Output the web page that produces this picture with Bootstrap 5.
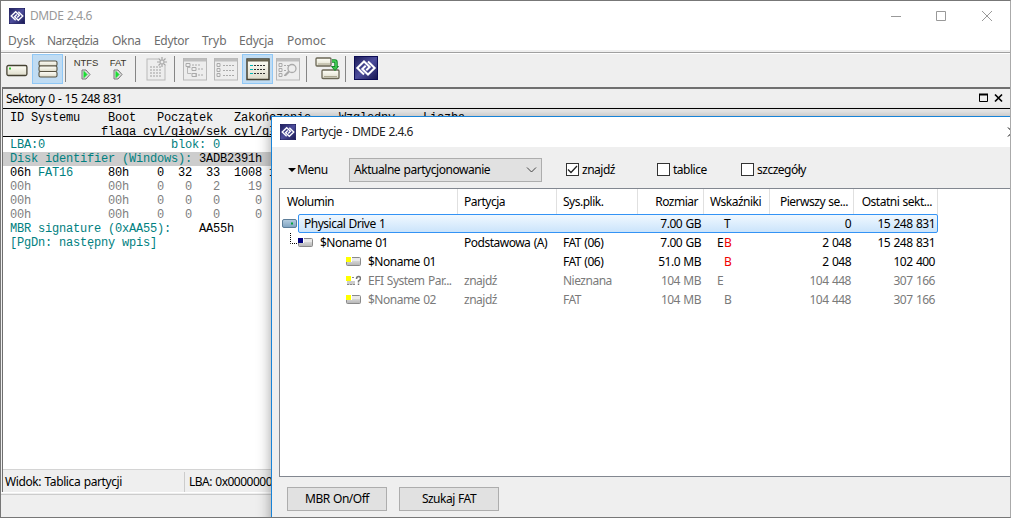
<!DOCTYPE html>
<html lang="pl">
<head>
<meta charset="utf-8">
<title>DMDE 2.4.6</title>
<link href="https://cdn.jsdelivr.net/npm/bootstrap@5.3.0/dist/css/bootstrap.min.css" rel="stylesheet">
<style>
html,body{margin:0;overflow:hidden}
body{font-family:"Noto Sans","Open Sans",sans-serif;font-size:12px;letter-spacing:-.5px;word-spacing:.7px;line-height:16px;color:#000;background:#efefef}
svg{display:block;flex:none}
.desk{width:1011px;height:518px;border:1px solid #777;border-right-color:#aaa;background:#efefef;position:relative;overflow:hidden}
.titlebar{height:30px;background:#fff;color:#999;padding-left:8px}
.menus{height:19px;background:#fff;color:#6d6d6d;letter-spacing:0}
.menus span{display:block;white-space:nowrap}
.rule-top{height:4px;border-top:2px solid #efefef;border-bottom:1px solid #fff;position:relative;background:#a0a0a0}
.tools{height:33px;background:#efefef}
.tool{height:30px;display:flex;align-items:center;justify-content:center}
.tool.on{background:#c0dcf3;border:1px solid #90c8f6}
.vline{width:1px;height:26px;background:#858585;margin-top:2px}
.fs{font-size:9.5px;line-height:9px;letter-spacing:-.1px;color:#3a3527;font-family:"Liberation Sans",sans-serif;justify-content:flex-start;padding-top:4px}
.fs svg{margin-top:2px}
.pane{height:405px;margin-left:1px;border-top:2px solid #707070;border-left:1px solid #707070;background:#fff}
.panehead{height:20px;background:#efefef;border-bottom:1px solid #000;padding:1px 6px 0 3px}
.mono{font-family:"Liberation Mono",monospace;font-size:12px;letter-spacing:-.201px;word-spacing:0;line-height:14px;margin:0;padding-left:7px;overflow:hidden;white-space:pre;color:#000}
.colhead{height:28px;background:#efefef;border-bottom:1px solid #000;padding-top:2px;line-height:14px}
.mono div{height:14px;margin-left:-7px;padding-left:7px}
.te{color:#008080}.gr{color:#808080}.hl{background:#cdcdcd}
.status{height:24px;background:#efefef;border-top:1px solid #d4d4d4}
.dialog{position:absolute;left:270px;top:115px;width:760px;height:420px;border:1px solid #1883d7;background:#efefef;box-shadow:0 2px 13px rgba(0,0,0,.38)}
.dtitle{height:30px;background:#fff;padding:0 0 1px 8px;color:#222}
.opts{height:41px}
.combo{width:193px;height:24px;background:#e1e1e1;border:1px solid #adadad;padding:0 4px;letter-spacing:-.46px}
.ck{width:13px;height:13px;border:1px solid #333;background:#fff;margin-right:3px}
.list{margin-left:7px;height:289px;border:1px solid #828790;background:#fff;width:760px}
.lrow{display:grid;grid-template-columns:178px 99px 81px 66px 66px 84px 84px;height:19px;align-items:center;white-space:nowrap;position:relative}
.lrow>*{padding-left:6px}
.lrow .n{text-align:right;padding:0 3px 0 0}
.lhead{height:25px;align-items:stretch;line-height:26px}
.lhead>*{border-right:1px solid #e0e0e0}
.lhead .n{padding-right:5px}
.sel::before{content:"";position:absolute;left:18px;right:0;width:640px;top:0;height:19px;border:1px solid #3393f5;border-radius:2px;background:linear-gradient(#f0f8ff,#cbe4fb)}
.sel>*{position:relative}
.dim{color:#7a7a7a}
.fl{display:grid;grid-template-columns:7px 8px;padding-left:13px!important}
.red{color:#f00000}
.pbtn{width:100px;height:24px;border:1px solid #adadad;background:#e1e1e1;text-align:center;line-height:22px}
.cut{height:12px;border:1px solid #adadad;background:#e1e1e1}
.w100{width:100px}.w107{width:107px}.w86{width:86px}
</style>
</head>
<body>
<svg width="0" height="0" class="position-absolute">
<defs>
<linearGradient id="nv" x1="0" y1="0" x2="1" y2="1"><stop offset="0" stop-color="#1c1c58"/><stop offset=".5" stop-color="#4d4d9c"/><stop offset="1" stop-color="#15154e"/></linearGradient>
<linearGradient id="gd" x1="0" y1="0" x2="0" y2="1"><stop offset="0" stop-color="#eee"/><stop offset="1" stop-color="#b5b5b5"/></linearGradient>
<linearGradient id="bl" x1="0" y1="0" x2="0" y2="1"><stop offset="0" stop-color="#b5cde0"/><stop offset="1" stop-color="#7ea2c0"/></linearGradient>
<linearGradient id="cr" x1="0" y1="0" x2="0" y2="1"><stop offset="0" stop-color="#fffff8"/><stop offset="1" stop-color="#dedccb"/></linearGradient>
<symbol id="logo" viewBox="0 0 24 24"><rect x=".5" y=".5" width="23" height="23" fill="url(#nv)" stroke="#0c0c55"/><g fill="none" stroke="#fff" stroke-width="2"><path d="M10 18.500 3.300 12 10 5.500 15.700 11 12.300 14.300"/><path d="M14 5.500 20.700 12 14 18.500 8.300 13 11.700 9.700"/></g></symbol>
<symbol id="part" viewBox="0 0 15 11"><rect x=".5" y="1.500" width="14" height="8" rx="1" fill="url(#gd)" stroke="#8a8a8a"/><path d="M6 2.500h8v2.500H6z" fill="#e8e8e8"/><path d="M0 0h6v6H0z" fill="#fff"/></symbol>
<symbol id="tree" viewBox="0 0 24 23"><rect x=".5" y=".5" width="23" height="21.500" fill="#ededed" stroke="#b8b8b8"/><path d="M1 2h22" stroke="#bebebe" stroke-width="3"/></symbol>
</defs>
</svg>

<div class="desk">
  <div class="titlebar d-flex align-items-center">
    <svg width="16" height="16" style="margin-top:-1px"><use href="#logo"/></svg><span style="margin-left:5px;letter-spacing:-.4px">DMDE 2.4.6</span>
    <svg class="ms-auto" width="124" height="30" fill="none" stroke="#999"><path d="M5 15.500h10M50.500 10.500h9v9h-9zM96 10l10 10m0-10l-10 10"/></svg>
  </div>
  <div class="menus d-flex align-items-center" style="padding-left:7px">
    <span style="width:39px">Dysk</span><span style="width:65px;letter-spacing:-.5px">Narzędzia</span><span style="width:42px;letter-spacing:-.3px">Okna</span><span style="width:48px;letter-spacing:-.3px">Edytor</span><span style="width:37px">Tryb</span><span style="width:48px;letter-spacing:-.2px">Edycja</span><span>Pomoc</span>
  </div>
  <div class="rule-top"></div>
  <div class="tools d-flex">
    <div class="tool" style="width:31px;padding-top:2px"><svg width="22" height="13"><rect x=".9" y="1.500" width="20" height="10" rx="1.500" fill="url(#cr)" stroke="#454132" stroke-width="1.300"/><path d="M3 4.500h2" stroke="#32cc32" stroke-width="2"/></svg></div>
    <div class="tool on" style="width:31px"><svg width="20" height="18" fill="url(#cr)" stroke="#585443" stroke-width="1.100"><rect x="1" y="1" width="18" height="5" rx="1.500"/><rect x="1" y="6" width="18" height="5.500" rx="1.500"/><rect x="1" y="11.500" width="18" height="5.500" rx="1.500"/></svg></div>
    <div class="vline" style="margin-left:2px"></div>
    <div class="tool flex-column fs" style="width:40px"><span>NTFS</span><svg width="10" height="11"><path d="M1 1h4l4 4.500-4 4.500H1z" fill="#ddd" stroke="#777"/><path d="M3 2.500v6l3-3z" fill="#19dd32" stroke="#19dd32"/></svg></div>
    <div class="tool flex-column fs" style="width:24px"><span>FAT</span><svg width="10" height="11"><path d="M1 1h4l4 4.500-4 4.500H1z" fill="#ddd" stroke="#777"/><path d="M3 2.500v6l3-3z" fill="#19dd32" stroke="#19dd32"/></svg></div>
    <div class="vline" style="margin-left:5px"></div>
    <div class="tool" style="width:38px;padding-left:4px"><svg width="22" height="24" stroke="#b9b9b9" fill="#ededed"><rect x="1" y="2" width="18" height="21" /><path d="M4 10h12M4 13h12M4 16h12M4 19h12" stroke-width="1.500" stroke-dasharray="2 1"/><rect x="12" y="0" width="10" height="9" stroke="none"/><path d="M16 0v10M11 5h10M12.500 1.500l7 7m0-7l-7 7" stroke="#a5a5a5" stroke-width="1.200"/><circle cx="16" cy="5" r="2" stroke="#aaa"/></svg></div>
    <div class="vline"></div>
    <div class="tool" style="width:40px"><svg width="24" height="23"><use href="#tree"/><path d="M4.500 5v10.500h4M4.500 9.500h3M13.500 15v4" stroke="#b8b8b8" fill="none"/><g fill="#eee" stroke="#aaa"><path d="M3 5.500h4v3H3zM9 9.500h4v3H9zM9 15.500h4v3H9z"/><path d="M9 7h9M15 11h6M15 17h6" stroke-dasharray="2 1"/></g></svg></div>
    <div class="tool" style="width:24px;margin-left:-1px"><svg width="24" height="23"><use href="#tree"/><g fill="none" stroke="#aaa"><path d="M3 5.500h3v3H3zM3 10.500h3v3H3zM3 15.500h3v3H3z"/><path d="M9 7.500h12M9 12.500h12M9 17.500h12" stroke-dasharray="2 1"/></g></svg></div>
    <div class="tool on" style="width:31px;margin-left:4px"><svg width="24" height="23"><rect x="1" y="1" width="22" height="20.500" fill="url(#cr)" stroke="#454132" stroke-width="1.500"/><path d="M1 2.500h22" stroke="#66624f" stroke-width="2"/><path d="M8 7.500h12M8 11.500h12M8 15.500h12" stroke="#333" stroke-dasharray="2 1"/><path d="M4 7.500h3M4 11.500h3M4 15.500h3" stroke="#00b5b5"/></svg></div>
    <div class="tool" style="width:31px;padding-right:1px"><svg width="24" height="23"><use href="#tree"/><g fill="none" stroke="#aaa"><path d="M3 5.500h3v3H3zM3 10.500h3v3H3zM3 15.500h3v3H3z"/><path d="M8 7.500h5M8 12.500h3M8 17.500h2" stroke-dasharray="2 1"/><circle cx="16" cy="10.500" r="4" fill="#eee" stroke-width="1.300"/><path d="M13 13.500l-4 4" stroke-width="2.200"/></g></svg></div>
    <div class="vline" style="margin-left:2px"></div>
    <div class="tool" style="width:39px;padding-left:1px;margin-top:-1px"><svg width="25" height="24"><g fill="url(#cr)" stroke="#6b6755" stroke-width="1.300"><rect x="1" y="2" width="15" height="8" rx="1"/><rect x="7" y="14" width="17" height="8.500" rx="1"/></g><path d="M3 8h12M9 20.500h13" stroke="#aaa68f"/><path d="M17 5h3q1 0 1 1.500V11" fill="none" stroke="#16862b" stroke-width="3.500"/><path d="M16.500 10.500h7l-3.500 4z" fill="#39c749" stroke="#16862b"/><path d="M17 5h3q1 0 1 1.500V11" fill="none" stroke="#4bd85b" stroke-width="1.500"/></svg></div>
    <div class="vline" style="margin-left:-1px"></div>
    <div class="tool" style="width:40px;margin-top:-1px"><svg width="24" height="24"><use href="#logo"/></svg></div>
  </div>
  <div class="pane">
    <div class="panehead d-flex align-items-center"><span>Sektory 0 - 15 248 831</span><svg class="ms-auto" width="26" height="12" fill="none" stroke="#000"><path d="M1.500 1.500h8v7h-8z"/><path d="M1 1.500h9" stroke-width="2"/><path d="M17 1.500l7 7m0-7l-7 7" stroke-width="1.700"/></svg></div>
    <pre class="mono colhead">ID Systemu    Boot   Początek   Zakończenie    Względny    Liczba
             flaga cyl/głow/sek cyl/gł</pre>
    <div class="mono" style="height:332px;padding-top:1px"><div class="te">LBA:0                  blok: 0</div><div class="hl"><span class="te">Disk identifier (Windows):</span> 3ADB2391h</div><div>06h <span class="te">FAT16</span>     80h    0  32  33  1008 1</div><div class="gr">00h           00h    0   0   2    19</div><div class="gr">00h           00h    0   0   0     0</div><div class="gr">00h           00h    0   0   0     0</div><div><span class="te">MBR signature (0xAA55):</span>    AA55h</div><div class="te">[PgDn: następny wpis]</div></div>
    <div class="status d-flex align-items-center" style="padding-left:2px"><span style="width:179px;letter-spacing:-.4px">Widok: Tablica partycji</span><span class="border-start border-1" style="padding-left:4px;border-color:#ccc!important;line-height:20px">LBA: 0x0000000000</span></div>
  </div>
  <div style="border-top:1px solid #fff;border-bottom:1px solid #ccc;height:3px"></div>

  <div class="dialog">
    <div class="dtitle d-flex align-items-center"><svg width="16" height="16"><use href="#logo"/></svg><span style="margin-left:5px;flex:none;width:706px">Partycje - DMDE 2.4.6</span><svg width="12" height="12" fill="none" stroke="#000"><path d="M1 1.500l9 9m0-9l-9 9"/></svg></div>
    <div class="opts d-flex align-items-center" style="padding:4px 0 0 16px">
      <svg width="9" height="6"><path d="M0 1h8l-4 4z"/></svg><span style="width:52px;letter-spacing:-.4px">Menu</span>
      <div class="combo d-flex align-items-center justify-content-between"><span>Aktualne partycjonowanie</span><svg width="11" height="8" fill="none" stroke="#444"><path d="M1 1.500l4.500 4.500L10 1.500"/></svg></div>
      <div class="d-flex align-items-center" style="margin-left:24px;width:91px"><div class="ck"><svg width="11" height="11" fill="none" stroke="#222" stroke-width="1.300"><path d="M1 5.500l3 3L10 2"/></svg></div>znajdź</div>
      <div class="d-flex align-items-center" style="width:84px"><div class="ck"></div>tablice</div>
      <div class="d-flex align-items-center"><div class="ck"></div>szczegóły</div>
    </div>
    <div class="list">
      <div class="lrow lhead"><div style="padding-left:7px">Wolumin</div><div>Partycja</div><div>Sys.plik.</div><div class="n">Rozmiar</div><div>Wskaźniki</div><div class="n">Pierwszy se...</div><div class="n">Ostatni sekt...</div></div>
      <div class="lrow sel"><div class="d-flex align-items-center" style="padding-left:2px"><svg width="15" height="11"><rect x=".5" y="1.500" width="14" height="8" rx="1.500" fill="url(#bl)" stroke="#5c7d99"/><path d="M9 5.500h2" stroke="#00a53c" stroke-width="2"/></svg><span style="margin-left:7px">Physical Drive 1</span></div><div></div><div></div><div class="n">7.00 GB</div><div class="fl"><span></span><span>T</span></div><div class="n">0</div><div class="n">15 248 831</div></div>
      <div class="lrow"><div class="d-flex align-items-center" style="padding-left:9px"><svg width="24" height="19"><path d="M1.500 0v10.500h8" fill="none" stroke="#000" stroke-dasharray="1 1"/><use href="#part" x="9" y="4" width="15" height="11"/><path d="M9 5h5v5H9z" fill="#000080"/></svg><span style="margin-left:7px">$Noname 01</span></div><div>Podstawowa (A)</div><div>FAT (06)</div><div class="n">7.00 GB</div><div class="fl"><span>E</span><span class="red">B</span></div><div class="n">2 048</div><div class="n">15 248 831</div></div>
      <div class="lrow"><div class="d-flex align-items-center" style="padding-left:66px"><svg width="15" height="11"><use href="#part"/><path d="M0 1h5v5H0z" fill="#ff0"/></svg><span style="margin-left:7px">$Noname 01</span></div><div></div><div>FAT (06)</div><div class="n">51.0 MB</div><div class="fl"><span></span><span class="red">B</span></div><div class="n">2 048</div><div class="n">102 400</div></div>
      <div class="lrow dim"><div class="d-flex align-items-center" style="padding-left:66px"><svg width="15" height="11"><path d="M1 6h8v4H1z" fill="#ccc"/><path d="M1 9.500h8M6 2.500h3" stroke="#888" stroke-dasharray="2 1"/><path d="M0 1h5v5H0z" fill="#ff0"/><path d="M10.500 4q0-2.500 2-2.500t2 2q0 1.500-2 2.500v1.500m0 1v1.500" fill="none" stroke="#777" stroke-width="1.500"/></svg><span style="margin-left:7px">EFI System Par...</span></div><div>znajdź</div><div>Nieznana</div><div class="n">104 MB</div><div class="fl"><span>E</span></div><div class="n">104 448</div><div class="n">307 166</div></div>
      <div class="lrow dim"><div class="d-flex align-items-center" style="padding-left:66px"><svg width="15" height="11"><use href="#part"/><path d="M0 1h5v5H0z" fill="#ff0"/></svg><span style="margin-left:7px">$Noname 02</span></div><div>znajdź</div><div>FAT</div><div class="n">104 MB</div><div class="fl"><span></span><span>B</span></div><div class="n">104 448</div><div class="n">307 166</div></div>
    </div>
    <div class="d-flex" style="padding:10px 0 6px 15px;gap:12px"><div class="pbtn">MBR On/Off</div><div class="pbtn">Szukaj FAT</div></div>
    <div class="d-flex" style="padding-left:15px;gap:12px"><div class="cut w100"></div><div class="cut w100"></div><div class="cut w107" style="margin-left:189px"></div><div class="cut w86"></div><div class="cut w86"></div></div>
  </div>
</div>
<script src="https://cdn.jsdelivr.net/npm/bootstrap@5.3.0/dist/js/bootstrap.bundle.min.js"></script>
</body>
</html>
